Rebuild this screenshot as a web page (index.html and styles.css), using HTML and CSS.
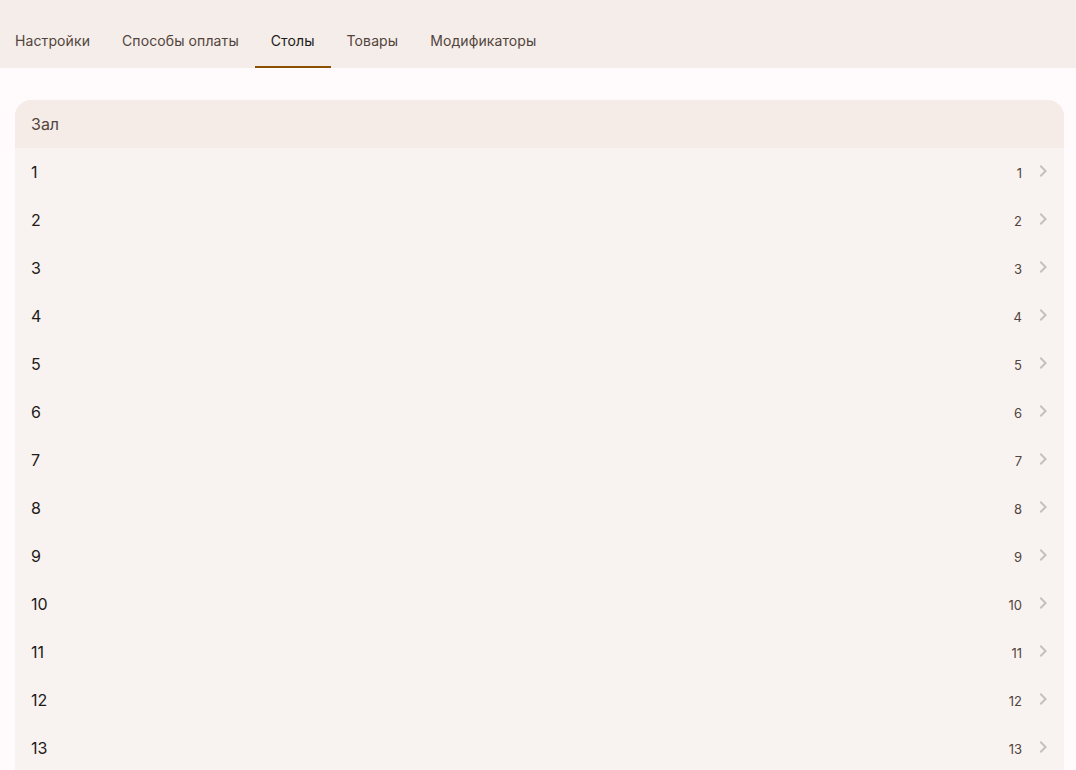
FILE: index.html
```html
<!DOCTYPE html>
<html lang="ru">
<head>
<meta charset="utf-8">
<link rel="stylesheet" href="styles.css">
</head>
<body>
<nav class="tabs">
  <div class="tab">Настройки</div>
  <div class="tab">Способы оплаты</div>
  <div class="tab active">Столы</div>
  <div class="tab">Товары</div>
  <div class="tab">Модификаторы</div>
</nav>
<main class="content">
  <section class="card">
    <div class="card-header">Зал</div>
    <div class="row"><span class="label">1</span><span class="trail"><span class="num">1</span><svg class="chev" viewBox="0 0 24 24"><path d="M10 6L8.59 7.41 13.17 12l-4.58 4.59L10 18l6-6z"/></svg></span></div>
    <div class="row"><span class="label">2</span><span class="trail"><span class="num">2</span><svg class="chev" viewBox="0 0 24 24"><path d="M10 6L8.59 7.41 13.17 12l-4.58 4.59L10 18l6-6z"/></svg></span></div>
    <div class="row"><span class="label">3</span><span class="trail"><span class="num">3</span><svg class="chev" viewBox="0 0 24 24"><path d="M10 6L8.59 7.41 13.17 12l-4.58 4.59L10 18l6-6z"/></svg></span></div>
    <div class="row"><span class="label">4</span><span class="trail"><span class="num">4</span><svg class="chev" viewBox="0 0 24 24"><path d="M10 6L8.59 7.41 13.17 12l-4.58 4.59L10 18l6-6z"/></svg></span></div>
    <div class="row"><span class="label">5</span><span class="trail"><span class="num">5</span><svg class="chev" viewBox="0 0 24 24"><path d="M10 6L8.59 7.41 13.17 12l-4.58 4.59L10 18l6-6z"/></svg></span></div>
    <div class="row"><span class="label">6</span><span class="trail"><span class="num">6</span><svg class="chev" viewBox="0 0 24 24"><path d="M10 6L8.59 7.41 13.17 12l-4.58 4.59L10 18l6-6z"/></svg></span></div>
    <div class="row"><span class="label">7</span><span class="trail"><span class="num">7</span><svg class="chev" viewBox="0 0 24 24"><path d="M10 6L8.59 7.41 13.17 12l-4.58 4.59L10 18l6-6z"/></svg></span></div>
    <div class="row"><span class="label">8</span><span class="trail"><span class="num">8</span><svg class="chev" viewBox="0 0 24 24"><path d="M10 6L8.59 7.41 13.17 12l-4.58 4.59L10 18l6-6z"/></svg></span></div>
    <div class="row"><span class="label">9</span><span class="trail"><span class="num">9</span><svg class="chev" viewBox="0 0 24 24"><path d="M10 6L8.59 7.41 13.17 12l-4.58 4.59L10 18l6-6z"/></svg></span></div>
    <div class="row"><span class="label">10</span><span class="trail"><span class="num">10</span><svg class="chev" viewBox="0 0 24 24"><path d="M10 6L8.59 7.41 13.17 12l-4.58 4.59L10 18l6-6z"/></svg></span></div>
    <div class="row"><span class="label">11</span><span class="trail"><span class="num">11</span><svg class="chev" viewBox="0 0 24 24"><path d="M10 6L8.59 7.41 13.17 12l-4.58 4.59L10 18l6-6z"/></svg></span></div>
    <div class="row"><span class="label">12</span><span class="trail"><span class="num">12</span><svg class="chev" viewBox="0 0 24 24"><path d="M10 6L8.59 7.41 13.17 12l-4.58 4.59L10 18l6-6z"/></svg></span></div>
    <div class="row"><span class="label">13</span><span class="trail"><span class="num">13</span><svg class="chev" viewBox="0 0 24 24"><path d="M10 6L8.59 7.41 13.17 12l-4.58 4.59L10 18l6-6z"/></svg></span></div>
  </section>
</main>
</body>
</html>
```
FILE: styles.css
```css
html, body {
  margin: 0;
  padding: 0;
  height: 100%;
  overflow: hidden;
}
body {
  background: #fffbfd;
  font-family: Inter, "Noto Sans", sans-serif;
  color: #201a18;
}
.tabs {
  display: flex;
  height: 68px;
  align-items: flex-end;
  background: #f5ede9;
  box-sizing: border-box;
}
.tab {
  height: 52px;
  padding: 0 16px 2px;
  box-sizing: border-box;
  display: flex;
  align-items: center;
  font-size: 14px;
  letter-spacing: 0.1px;
  color: #52443c;
  border-bottom: 2px solid transparent;
}
.tab:first-child {
  padding-left: 15px;
}
.tab.active {
  color: #201a18;
  border-bottom-color: #8b5000;
}
.content {
  padding: 32px 12px 0 15px;
}
.card {
  border-radius: 16px 16px 0 0;
  overflow: hidden;
  background: #f8f3f1;
}
.card-header {
  height: 48px;
  display: flex;
  align-items: center;
  padding: 0 16px;
  background: #f5ece8;
  font-size: 16px;
  color: #52443c;
}
.row {
  height: 48px;
  display: flex;
  align-items: center;
  justify-content: space-between;
  padding: 0 9px 0 16px;
}
.label {
  font-size: 16px;
  color: #201a18;
}
.trail {
  display: flex;
  align-items: center;
  gap: 9px;
}
.num {
  font-size: 13px;
  color: #52443c;
  padding-top: 2px;
}
.chev {
  width: 24px;
  height: 24px;
  fill: #c4c0be;
  margin-top: -2px;
}
```
